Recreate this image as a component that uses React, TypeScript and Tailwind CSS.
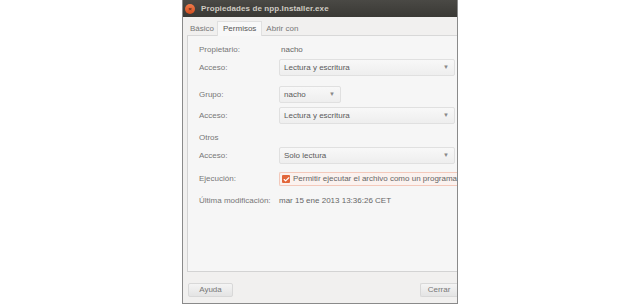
import { Check } from 'lucide-react';

const font = { fontFamily: '"Liberation Sans", Arial, sans-serif' };

function Combo({ value, width }: { value: string; width: string }) {
  return (
    <div
      className={`${width} h-[17px] flex items-center justify-between pl-[4px] pr-[5px] border border-[#e0e0e0] rounded-[2px] bg-gradient-to-b from-[#f8f8f8] to-[#eeeeee] text-[8px] text-[#5a5a5a]`}
    >
      <span>{value}</span>
      <span className="text-[6px] text-[#888]">▼</span>
    </div>
  );
}

function Row({ label, children, className }: { label: string; children?: React.ReactNode; className: string }) {
  return (
    <div className={`flex items-center ${className}`}>
      <div className="w-[80px] shrink-0 text-[8px] text-[#777]">{label}</div>
      {children}
    </div>
  );
}

export default function App() {
  return (
    <div className="w-[640px] h-[307px] bg-white flex justify-center" style={font}>
      <div className="w-[276px] h-[304px] bg-[#f1f0ef] border-x border-b border-[#8a8a8a] flex flex-col">
        {/* Title bar */}
        <div className="h-[17px] shrink-0 bg-gradient-to-b from-[#4a4945] to-[#3a3935] flex items-center pl-[2px]">
          <div className="w-[10px] h-[10px] rounded-full bg-gradient-to-b from-[#f07a4a] to-[#d24f1f] flex items-center justify-center">
            <span className="text-[6px] leading-none text-[#5a2a15] font-bold">×</span>
          </div>
          <span className="ml-[6px] text-[8px] font-bold text-[#cfcbc3] tracking-[0.1px]">Propiedades de npp.Installer.exe</span>
        </div>

        {/* Tabs */}
        <div className="h-[19px] shrink-0 flex items-end pl-[4px] text-[8px] text-[#777]">
          <div className="h-[14px] px-[3px] flex items-center border-b border-[#d8d8d8]">Básico</div>
          <div className="h-[15px] px-[5px] flex items-center bg-[#f8f8f8] border-x border-t border-[#e0e0e0] text-[#555]">Permisos</div>
          <div className="h-[14px] px-[4px] flex items-center border-b border-[#d8d8d8]">Abrir con</div>
          <div className="flex-1 border-b border-[#d8d8d8]" />
        </div>

        {/* Panel */}
        <div className="ml-[4px] h-[236px] shrink-0 bg-[#f6f6f6] border-l border-b border-[#d3d3d3] pl-[11px] pr-[2px] pt-[6px] flex flex-col">
          <Row label="Propietario:" className="h-[16px]">
            <span className="text-[8px] text-[#666] pl-[2px]">nacho</span>
          </Row>
          <Row label="Acceso:" className="h-[17px] mt-[1px]">
            <Combo value="Lectura y escritura" width="w-[178px]" />
          </Row>
          <Row label="Grupo:" className="h-[15px] mt-[11px]">
            <Combo value="nacho" width="w-[62px]" />
          </Row>
          <Row label="Acceso:" className="h-[17px] mt-[5px]">
            <Combo value="Lectura y escritura" width="w-[178px]" />
          </Row>
          <div className="h-[14px] mt-[7px] flex items-center text-[8px] text-[#777]">Otros</div>
          <Row label="Acceso:" className="h-[17px] mt-[2px]">
            <Combo value="Solo lectura" width="w-[178px]" />
          </Row>
          <Row label="Ejecución:" className="h-[14px] mt-[8px]">
            <div className="flex-1 h-[14px] flex items-center border border-r-0 border-[#f3c9bb] rounded-l-[2px] bg-[#fbf2ef] pl-[2px]">
              <div className="w-[8px] h-[8px] rounded-[1px] bg-[#e2663a] flex items-center justify-center">
                <Check size={7} strokeWidth={4} color="#fff" />
              </div>
              <span className="ml-[3px] text-[8px] text-[#666] whitespace-nowrap">Permitir ejecutar el archivo como un programa</span>
            </div>
          </Row>
          <Row label="Última modificación:" className="h-[14px] mt-[8px]">
            <span className="text-[8px] text-[#666] whitespace-nowrap">mar 15 ene 2013 13:36:26 CET</span>
          </Row>
        </div>

        {/* Buttons */}
        <div className="flex justify-between items-center pl-[5px] mt-[11px]">
          <div className="w-[45px] h-[14px] flex items-center justify-center border border-[#d8d8d8] rounded-[2px] bg-gradient-to-b from-[#f4f4f4] to-[#e4e4e4] text-[8px] text-[#777]">Ayuda</div>
          <div className="w-[37px] h-[14px] flex items-center justify-center border border-r-0 border-[#d8d8d8] rounded-l-[2px] bg-gradient-to-b from-[#f4f4f4] to-[#e4e4e4] text-[8px] text-[#777]">Cerrar</div>
        </div>
      </div>
    </div>
  );
}
